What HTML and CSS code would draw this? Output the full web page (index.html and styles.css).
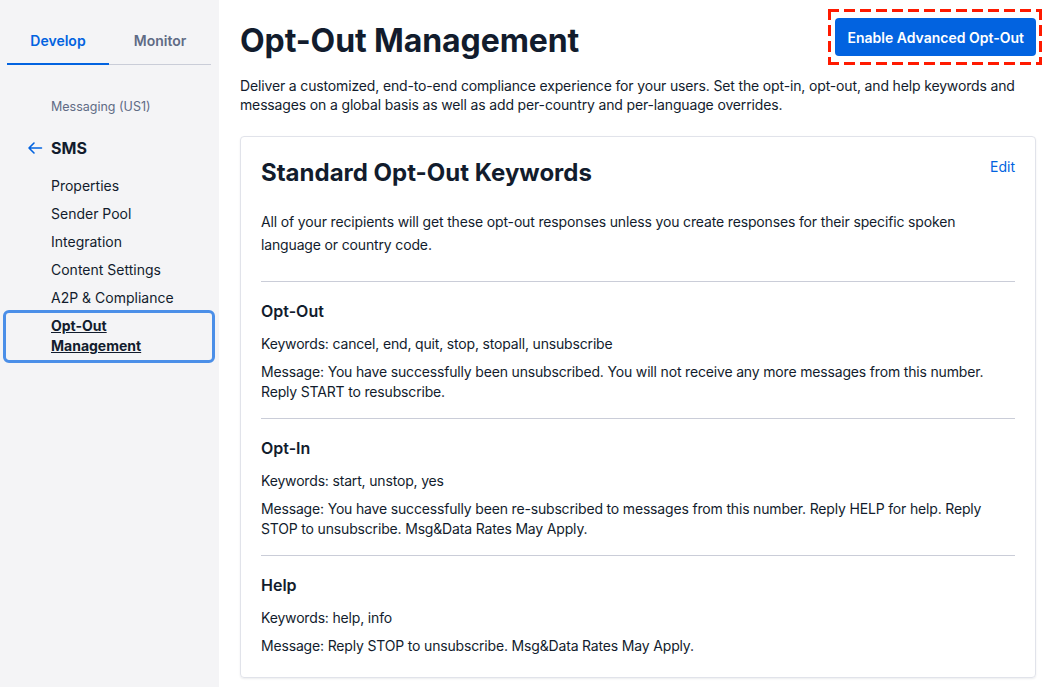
FILE: index.html
```html
<!DOCTYPE html>
<html lang="en">
<head>
    <meta charset="UTF-8" />
    <meta name="viewport" content="width=device-width, initial-scale=1.0" />
    <title>Opt-Out Management</title>
    <link rel="stylesheet" href="styles.css">
</head>
<body>
    <div class="layout">
        <aside class="sidebar">
            <div class="tabs">
                <div class="tab active">Develop</div>
                <div class="tab">Monitor</div>
            </div>
            <div class="product">Messaging (US1)</div>
            <div class="back">
                <svg class="back-icon" width="16" height="16" viewBox="0 0 16 16" fill="none">
                    <path d="M14.5 8H2M7 3L2 8l5 5" stroke="#0263e0" stroke-width="1.6" stroke-linecap="round" stroke-linejoin="round"/>
                </svg>
                <span>SMS</span>
            </div>
            <nav class="nav">
                <a href="#">Properties</a>
                <a href="#">Sender Pool</a>
                <a href="#">Integration</a>
                <a href="#">Content Settings</a>
                <a href="#">A2P &amp; Compliance</a>
                <a href="#" class="current">Opt-Out<br>Management</a>
            </nav>
        </aside>

        <main class="main">
            <div class="page-header">
                <h1>Opt-Out Management</h1>
                <div class="highlight">
                    <button class="btn-primary">Enable Advanced Opt-Out</button>
                </div>
            </div>
            <p class="intro">Deliver a customized, end-to-end compliance experience for your users. Set the opt-in, opt-out, and help keywords and messages on a global basis as well as add per-country and per-language overrides.</p>

            <div class="card">
                <div class="card-head">
                    <h2>Standard Opt-Out Keywords</h2>
                    <a href="#" class="edit">Edit</a>
                </div>
                <p class="card-desc">All of your recipients will get these opt-out responses unless you create responses for their specific spoken language or country code.</p>

                <div class="section">
                    <h3>Opt-Out</h3>
                    <p class="keywords">Keywords: cancel, end, quit, stop, stopall, unsubscribe</p>
                    <p class="message">Message: You have successfully been unsubscribed. You will not receive any more messages from this number. Reply START to resubscribe.</p>
                </div>
                <div class="section">
                    <h3>Opt-In</h3>
                    <p class="keywords">Keywords: start, unstop, yes</p>
                    <p class="message">Message: You have successfully been re-subscribed to messages from this number. Reply HELP for help. Reply STOP to unsubscribe. Msg&amp;Data Rates May Apply.</p>
                </div>
                <div class="section">
                    <h3>Help</h3>
                    <p class="keywords">Keywords: help, info</p>
                    <p class="message">Message: Reply STOP to unsubscribe. Msg&amp;Data Rates May Apply.</p>
                </div>
            </div>
        </main>
    </div>
</body>
</html>
```

FILE: styles.css
```css
:root {
    --text-color: #121c2d;
    --weak-color: #606b85;
    --blue-color: #0263e0;
    --border-color: #e1e3ea;
    --sidebar-bg: #f4f4f6;
    --dash-color: #ff1a00;
}

body {
    margin: 0;
    font-family: Inter, 'Noto Sans', sans-serif;
    color: var(--text-color);
    background: white;
}

.layout {
    display: flex;
    min-height: 100vh;
}

/* Sidebar */
.sidebar {
    width: 219px;
    flex-shrink: 0;
    background-color: var(--sidebar-bg);
    padding: 0 4px 0 3px;
    box-sizing: border-box;
}

.tabs {
    display: flex;
    margin: 0 4px;
    padding-top: 29px;
    border-bottom: 1px solid #cacdd8;
}

.tab {
    flex: 1;
    text-align: center;
    font-size: 14px;
    font-weight: 600;
    line-height: 24px;
    padding-bottom: 10px;
    color: var(--weak-color);
    margin-bottom: -1px;
    border-bottom: 2px solid transparent;
}

.tab.active {
    color: var(--blue-color);
    border-bottom-color: var(--blue-color);
}

.product {
    font-size: 12.5px;
    color: var(--weak-color);
    padding-left: 48px;
    margin-top: 33px;
    line-height: 18px;
}

.back {
    display: flex;
    align-items: center;
    gap: 8px;
    margin-top: 20px;
    padding-left: 24px;
    font-size: 16px;
    font-weight: 700;
    line-height: 24px;
}

.nav {
    display: flex;
    flex-direction: column;
    margin-top: 12px;
}

.nav a {
    color: var(--text-color);
    text-decoration: none;
    font-size: 14px;
    line-height: 20px;
    padding: 4px 0 4px 48px;
}

.nav a.current {
    font-weight: 700;
    text-decoration: underline;
    border: 3px solid #4b8fe8;
    border-radius: 6px;
    padding: 3px 0 4px 45px;
    margin-top: -2px;
}

/* Main */
.main {
    flex: 1;
    padding: 18px 22px 0 21px;
}

.page-header {
    display: flex;
    justify-content: space-between;
    align-items: flex-start;
}

h1 {
    font-size: 32px;
    font-weight: 700;
    line-height: 40px;
    margin: 3px 0 0;
    letter-spacing: -0.1px;
}

/* dashed call-out around the button */
.highlight {
    padding: 9px 6px 9px 7px;
    margin: -9px -6px 0 0;
    background:
        repeating-linear-gradient(90deg, var(--dash-color) 0 11px, transparent 11px 16px) top left / 100% 3px no-repeat,
        repeating-linear-gradient(90deg, var(--dash-color) 0 11px, transparent 11px 16px) bottom left / 100% 3px no-repeat,
        repeating-linear-gradient(180deg, var(--dash-color) 0 11px, transparent 11px 16px) top left / 3px 100% no-repeat,
        repeating-linear-gradient(180deg, var(--dash-color) 0 11px, transparent 11px 16px) top right / 3px 100% no-repeat;
}

.btn-primary {
    display: block;
    background-color: var(--blue-color);
    color: white;
    border: none;
    border-radius: 4px;
    font-family: inherit;
    font-size: 14px;
    font-weight: 600;
    padding: 0 12px 0 13px;
    height: 38px;
}

.intro {
    font-size: 14px;
    line-height: 19px;
    letter-spacing: -0.15px;
    margin: 11px 0 22px;
}

.card {
    border: 1px solid var(--border-color);
    border-radius: 4px;
    box-shadow: 0 1px 2px rgba(18, 28, 45, 0.08);
    padding: 20px 20px 21px;
}

.card-head {
    display: flex;
    justify-content: space-between;
    align-items: flex-start;
}

h2 {
    font-size: 24px;
    font-weight: 700;
    line-height: 32px;
    margin: 0;
}

.edit {
    color: var(--blue-color);
    text-decoration: none;
    font-size: 14px;
    line-height: 20px;
}

.card-desc {
    font-size: 14px;
    line-height: 23px;
    letter-spacing: -0.15px;
    margin: 21px 0 0;
    padding-bottom: 25px;
}

.section {
    border-top: 1px solid #cacdd8;
    padding: 17px 0 16px;
}

.section:last-child {
    padding-bottom: 0;
}

h3 {
    font-size: 16px;
    font-weight: 600;
    line-height: 24px;
    margin: 0 0 11px;
}

.section p {
    font-size: 14px;
    line-height: 20px;
    letter-spacing: -0.17px;
    margin: 0;
}

.section .message {
    margin-top: 8px;
}
```
